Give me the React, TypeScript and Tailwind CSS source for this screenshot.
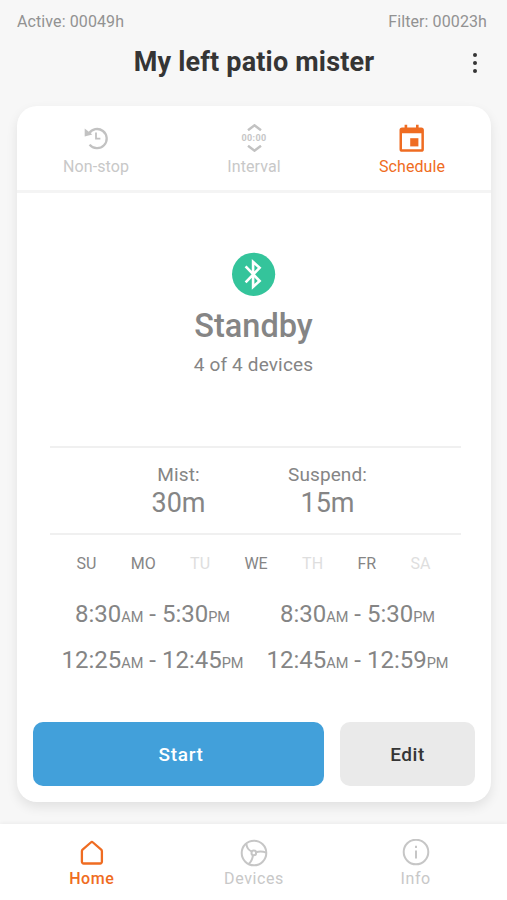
import React from "react";

const tabBase = "flex flex-col items-center pl-px text-[16px] leading-[20px] tracking-[0.1px]";
const navBase = "flex flex-col items-center pl-px";

function NonStopIcon() {
  return (
    <svg className="h-7 w-7" viewBox="0 0 28 28" fill="none" stroke="#c2c2c2" strokeWidth="2.3">
      <path d="M6.8 9.800A9.600 9.600 0 1 1 7.600 20.600" />
      <path d="M2.700 4.600v8l7.600-2.200z" fill="#c2c2c2" stroke="none" />
      <path d="M14 8.600v6h4.400" strokeWidth="1.800" />
    </svg>
  );
}

function IntervalIcon() {
  return (
    <span className="flex h-7 w-7 flex-col items-center justify-between">
      <svg className="h-[7px] w-[15px]" viewBox="0 0 15 7" fill="none" stroke="#c2c2c2" strokeWidth="2.4">
        <path d="m1 6.300 6.500-5 6.500 5" />
      </svg>
      <span className="text-[9px] leading-[10px] font-bold tracking-[0.35px] text-[#c6c6c6]">00:00</span>
      <svg className="h-[7px] w-[15px]" viewBox="0 0 15 7" fill="none" stroke="#c2c2c2" strokeWidth="2.4">
        <path d="m1 .700 6.500 5 6.500-5" />
      </svg>
    </span>
  );
}

function ScheduleIcon() {
  return (
    <svg className="h-7 w-7" viewBox="0 0 28 28" fill="#ef6c22">
      <path
        fillRule="evenodd"
        d="M6.600.8h2.600v2.600h8.800V.8h2.600v2.600h2.700a2.600 2.600 0 0 1 2.600 2.600v19.200a2.600 2.600 0 0 1-2.600 2.600H4.100a2.600 2.600 0 0 1-2.600-2.600V6a2.600 2.600 0 0 1 2.600-2.600h2.500zM4 9.200v16h19.400v-16z"
      />
      <path d="M12.200 14.200h8.200v8.200h-8.200z" />
    </svg>
  );
}

function BluetoothIcon() {
  return (
    <svg className="h-11 w-11" viewBox="0 0 44 44">
      <circle cx="21.600" cy="22.300" r="21.600" fill="#34c49b" />
      <path d="m13.600 14.400 14 14.600-6.500 5.800V10l6.500 5.800-14 14.600" fill="none" stroke="#fff" strokeWidth="2.600" />
    </svg>
  );
}

function HomeIcon() {
  return (
    <svg className="h-7 w-7" viewBox="0 0 28 28" fill="none" stroke="#ef6c22" strokeWidth="2.300" strokeLinejoin="round">
      <path d="M3.900 12.200a2 2 0 0 1 .7-1.500l8.200-7.200a1.600 1.600 0 0 1 2.200 0l8.200 7.200a2 2 0 0 1 .7 1.500v10.600a1.700 1.700 0 0 1-1.700 1.700H5.600a1.700 1.700 0 0 1-1.700-1.700z" />
    </svg>
  );
}

function DevicesIcon() {
  return (
    <svg className="h-7 w-7" viewBox="0 0 28 28" fill="none" stroke="#c6c6c6" strokeWidth="2">
      <circle cx="14" cy="14" r="12.300" />
      <circle cx="13.800" cy="13.900" r="2.300" />
      <path d="M6.400 4.800c.3 4 2.200 6.600 5.600 7.800M16 13.200c3.400-1 6.900-.8 10.200.4M13 16.100c-.5 4-2 7-4.700 9.200" />
    </svg>
  );
}

function InfoIcon() {
  return (
    <svg className="h-7 w-7" viewBox="0 0 28 28" fill="none" stroke="#c6c6c6" strokeWidth="2">
      <circle cx="14" cy="13" r="12.300" />
      <path d="M14 11.400v8M14 6.800v2.300" />
    </svg>
  );
}

const days = [
  { name: "SU", on: true },
  { name: "MO", on: true },
  { name: "TU", on: false },
  { name: "WE", on: true },
  { name: "TH", on: false },
  { name: "FR", on: true },
  { name: "SA", on: false },
];

const ranges = [
  ["8:30", "5:30"],
  ["8:30", "5:30"],
  ["12:25", "12:45"],
  ["12:45", "12:59"],
];

export default function App() {
  return (
    <div className="flex h-[900px] w-[507px] flex-col overflow-hidden bg-[#f7f7f7] font-['Roboto','Liberation_Sans',sans-serif] text-[#858585]">
      <header className="h-[106px] shrink-0">
        <div className="flex justify-between pt-3 pr-5 pl-[17px] text-[16px] leading-[20px] tracking-[0.1px] text-[#929292]">
          <span>Active: 00049h</span>
          <span>Filter: 00023h</span>
        </div>
        <div className="mt-3 grid grid-cols-[1fr_auto_1fr] items-center">
          <h1 className="col-start-2 pl-px text-[27px] leading-9 font-bold tracking-[0.18px] text-[#353535]">My left patio mister</h1>
          <button className="mt-[2px] mr-[30px] flex flex-col gap-1 justify-self-end" aria-label="More">
            <span className="h-1 w-1 rounded-full bg-[#353535]" />
            <span className="h-1 w-1 rounded-full bg-[#353535]" />
            <span className="h-1 w-1 rounded-full bg-[#353535]" />
          </button>
        </div>
      </header>

      <main className="mx-auto flex h-[696px] w-[474px] shrink-0 flex-col rounded-[20px] bg-white shadow-[0_5px_12px_rgba(0,0,0,0.09)]">
        <div className="grid h-[87px] grid-cols-3 border-b-[3px] border-[#f4f4f4] pt-[18px] text-[#c8c8c8]">
          <div className={tabBase}>
            <NonStopIcon />
            <span className="mt-[5px]">Non-stop</span>
          </div>
          <div className={tabBase}>
            <IntervalIcon />
            <span className="mt-[5px]">Interval</span>
          </div>
          <div className={tabBase}>
            <ScheduleIcon />
            <span className="mt-[5px] text-[#ef6c22]">Schedule</span>
          </div>
        </div>

        <section className="flex h-[253px] flex-col items-center pt-[59px]">
          <BluetoothIcon />
          <h2 className="mt-[10px] text-[32.5px] leading-10 font-medium">Standby</h2>
          <p className="mt-[7px] text-[19px] leading-6 tracking-[0.15px]">4 of 4 devices</p>
        </section>

        <section className="mr-[30px] ml-[33px] flex h-[89px] justify-center border-y-2 border-[#f0f0f0] pt-[15px] pr-[4px]">
          <div className="flex w-[149px] flex-col items-center">
            <span className="text-[19px] leading-6 tracking-[0.1px]">Mist:</span>
            <span className="text-[27px] leading-8">30m</span>
          </div>
          <div className="flex w-[149px] flex-col items-center">
            <span className="text-[19px] leading-6 tracking-[0.1px]">Suspend:</span>
            <span className="text-[27px] leading-8">15m</span>
          </div>
        </section>

        <div className="mt-[19px] flex justify-between px-[60px] text-[16px] leading-[20px]">
          {days.map((d) => (
            <span key={d.name} className={d.on ? "" : "text-[#dedede]"}>{d.name}</span>
          ))}
        </div>

        <div className="mt-6 grid grid-cols-[205px_205px] justify-center gap-y-[14px] pl-[3px] text-[24px] leading-8">
          {ranges.map(([from, to], i) => (
            <div key={i} className="h-8 text-center whitespace-nowrap">
              {from}<span className="text-[14.5px] leading-none">AM</span> - {to}<span className="text-[14.5px] leading-none">PM</span>
            </div>
          ))}
        </div>

        <div className="mt-auto mb-4 flex h-16 gap-4 px-4 text-[19px] font-medium">
          <button className="w-[291px] rounded-[10px] bg-[#42a0da] pt-[2px] pl-[6px] tracking-[0.7px] text-white">Start</button>
          <button className="flex-1 rounded-[10px] bg-[#eaeaea] pt-[2px] pl-px tracking-[0.5px] text-[#353535]">Edit</button>
        </div>
      </main>

      <nav className="mt-[22px] grid h-[76px] grid-cols-3 bg-white px-[11px] pt-[15px] text-[16px] leading-[20px] tracking-[0.6px] text-[#c8c8c8] shadow-[0_-1px_4px_rgba(0,0,0,0.05)]">
        <div className="flex flex-col items-center font-medium text-[#ef6c22]">
          <HomeIcon />
          <span className="mt-[2px]">Home</span>
        </div>
        <div className={navBase}>
          <DevicesIcon />
          <span className="mt-[2px]">Devices</span>
        </div>
        <div className={navBase}>
          <InfoIcon />
          <span className="mt-[2px]">Info</span>
        </div>
      </nav>
    </div>
  );
}
